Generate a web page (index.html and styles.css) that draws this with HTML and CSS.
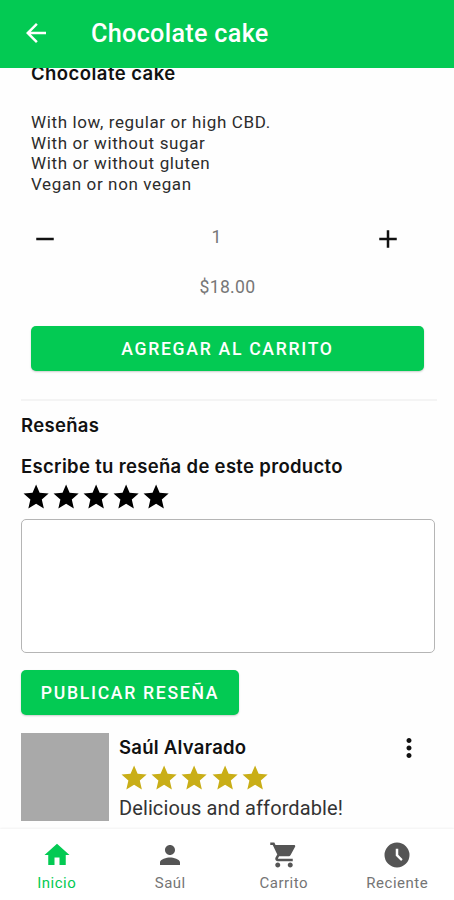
FILE: index.html
```html
<!DOCTYPE html>
<html lang="es">
<head>
<meta charset="utf-8">
<title>Chocolate cake</title>
<link rel="stylesheet" href="styles.css">
</head>
<body>
<svg class="defs" width="0" height="0">
  <symbol id="star" viewBox="0 0 24 24"><path d="M12 17.27 18.18 21l-1.64-7.03L22 9.24l-7.19-.61L12 2 9.19 8.63 2 9.24l5.46 4.73L5.82 21z"/></symbol>
</svg>
<div class="app">
  <header class="bar">
    <svg class="back" viewBox="0 0 24 24"><path d="M20 11H7.83l5.59-5.59L12 4l-8 8 8 8 1.41-1.41L7.83 13H20v-2z"/></svg>
    <h1 class="title">Chocolate cake</h1>
  </header>
  <main class="content">
    <section class="product">
      <h2 class="heading name">Chocolate cake</h2>
      <p class="description">With low, regular or high CBD.<br>With or without sugar<br>With or without gluten<br>Vegan or non vegan</p>
      <div class="quantity">
        <svg class="icon" viewBox="0 0 24 24"><path d="M19 13H5v-2h14v2z"/></svg>
        <span class="count">1</span>
        <svg class="icon" viewBox="0 0 24 24"><path d="M19 13h-6v6h-2v-6H5v-2h6V5h2v6h6v2z"/></svg>
      </div>
      <p class="price">$18.00</p>
      <button class="button add">AGREGAR AL CARRITO</button>
    </section>
    <section class="reviews">
      <h2 class="heading section-title">Reseñas</h2>
      <h3 class="heading prompt">Escribe tu reseña de este producto</h3>
      <div class="stars">
        <svg><use href="#star"/></svg><svg><use href="#star"/></svg><svg><use href="#star"/></svg><svg><use href="#star"/></svg><svg><use href="#star"/></svg>
      </div>
      <textarea class="field"></textarea>
      <button class="button publish">PUBLICAR RESEÑA</button>
      <article class="review">
        <div class="avatar"></div>
        <div class="review-body">
          <h3 class="heading author">Saúl Alvarado</h3>
          <div class="stars gold">
            <svg><use href="#star"/></svg><svg><use href="#star"/></svg><svg><use href="#star"/></svg><svg><use href="#star"/></svg><svg><use href="#star"/></svg>
          </div>
          <p class="comment">Delicious and affordable!</p>
        </div>
        <svg class="icon more" viewBox="0 0 24 24"><path d="M12 8c1.100 0 2-.9 2-2s-.9-2-2-2-2 .9-2 2 .9 2 2 2zm0 2c-1.100 0-2 .9-2 2s.9 2 2 2 2-.9 2-2-.9-2-2-2zm0 6c-1.100 0-2 .9-2 2s.9 2 2 2 2-.9 2-2-.9-2-2-2z"/></svg>
      </article>
    </section>
  </main>
  <nav class="tabs">
    <a class="tab active"><svg viewBox="0 0 24 24"><path d="M10 20v-6h4v6h5v-8h3L12 3 2 12h3v8z"/></svg><span>Inicio</span></a>
    <a class="tab"><svg viewBox="0 0 24 24"><path d="M12 12c2.210 0 4-1.790 4-4s-1.790-4-4-4-4 1.790-4 4 1.790 4 4 4zm0 2c-2.670 0-8 1.340-8 4v2h16v-2c0-2.660-5.330-4-8-4z"/></svg><span>Saúl</span></a>
    <a class="tab"><svg viewBox="0 0 24 24"><path d="M7 18c-1.100 0-1.990.9-1.990 2S5.900 22 7 22s2-.9 2-2-.9-2-2-2zM1 2v2h2l3.600 7.590-1.350 2.450c-.16.28-.25.61-.25.96 0 1.100.9 2 2 2h12v-2H7.420c-.14 0-.25-.11-.25-.25l.03-.12.9-1.630h7.450c.75 0 1.410-.41 1.750-1.030l3.580-6.490c.08-.14.12-.31.12-.48 0-.55-.45-1-1-1H5.210l-.94-2H1zm16 16c-1.100 0-1.990.9-1.990 2s.89 2 1.990 2 2-.9 2-2-.9-2-2-2z"/></svg><span>Carrito</span></a>
    <a class="tab"><svg viewBox="0 0 24 24"><path fill-rule="evenodd" d="M12 2a10 10 0 1 0 0 20 10 10 0 0 0 0-20zm3.300 14.700-4.300-4.200V7h2v4.800l3.500 3.500z"/></svg><span>Reciente</span></a>
  </nav>
</div>
</body>
</html>
```
FILE: styles.css
```css
* { box-sizing: border-box; }
body { margin: 0; background: #fefefe; font-family: Roboto, sans-serif; color: #111; }
h1, h2, h3, p { margin: 0; }
svg { display: block; flex: none; fill: currentColor; }
.defs { position: absolute; }
.app { height: 900px; display: flex; flex-direction: column; overflow: hidden; }
.bar { height: 68px; flex: none; display: flex; align-items: center; gap: 40px; padding-left: 21px; background: #03ca53; color: #fff; }
.back { width: 30px; height: 30px; margin-top: -2px; }
.title { font-size: 25.2px; line-height: 30px; font-weight: 500; letter-spacing: .3px; white-space: nowrap; }
.content { flex: 1; min-height: 0; overflow: hidden; }
.product { margin: 0 17px 0 21px; padding: 0 13px 28px 10px; border-bottom: 2px solid #f4f4f4; display: flex; flex-direction: column; }
.heading { font-family: Inter, sans-serif; font-weight: 600; font-size: 18.5px; line-height: 24px; letter-spacing: .32px; white-space: nowrap; }
.name { margin-top: -7px; letter-spacing: .45px; }
.description { margin-top: 27px; font-size: 17px; line-height: 20.6px; letter-spacing: .62px; color: #2c2c2c; }
.quantity { display: flex; align-items: center; justify-content: space-between; height: 30px; margin-top: 30px; padding-right: 21px; margin-left: -1px; }
.icon { width: 30px; height: 30px; }
.count { font-size: 17.6px; color: #777; position: relative; top: -2px; }
.price { margin-top: 22px; text-align: center; font-size: 17.6px; line-height: 22px; letter-spacing: .3px; color: #777; }
.button { display: block; height: 45px; padding: 1px 0 0; border: 0; border-radius: 5px; background: #03ca53; color: #fff; font: 500 17.6px/44px Roboto, sans-serif; letter-spacing: 1.7px; box-shadow: 0 1px 2px #0003; white-space: nowrap; }
.add { margin-top: 28px; }
.reviews { padding: 12px 20px 0 21px; }
.prompt { margin-top: 17px; }
.stars { display: flex; height: 30px; }
.stars svg { width: 30.2px; height: 30.2px; }
.reviews > .stars { margin-top: 4px; margin-left: -.5px; color: #000; }
.field { display: block; width: 414px; height: 134px; margin: 6.5px 0 0 -.5px; border: 1.5px solid #b5b5b5; border-radius: 5px; background: #fff; resize: none; }
.publish { width: 218px; margin-top: 17.5px; }
.review { display: flex; margin-top: 18px; }
.avatar { width: 88px; height: 88px; background: #a9a9a9; }
.review-body { flex: 1; margin-left: 10px; padding-top: 2px; }
.author { letter-spacing: .27px; }
.gold { color: #c9ae17; margin-top: 4px; }
.comment { font-size: 20px; line-height: 24px; margin-top: 3px; letter-spacing: .1px; color: #333; white-space: nowrap; }
.more { margin: 0 10px 0 0; }
.tabs { flex: none; height: 71px; display: grid; grid-template-columns: repeat(4, 1fr); background: #fff; box-shadow: 0 -1px 2px #0000000d; position: relative; }
.tab { display: flex; flex-direction: column; align-items: center; padding-top: 11px; color: #757575; font-size: 15px; line-height: 18px; letter-spacing: .5px; }
.tab svg { width: 30px; height: 30px; color: #555; }
.tab span { margin-top: 4px; }
.tab.active, .tab.active svg { color: #03ca53; }
```
